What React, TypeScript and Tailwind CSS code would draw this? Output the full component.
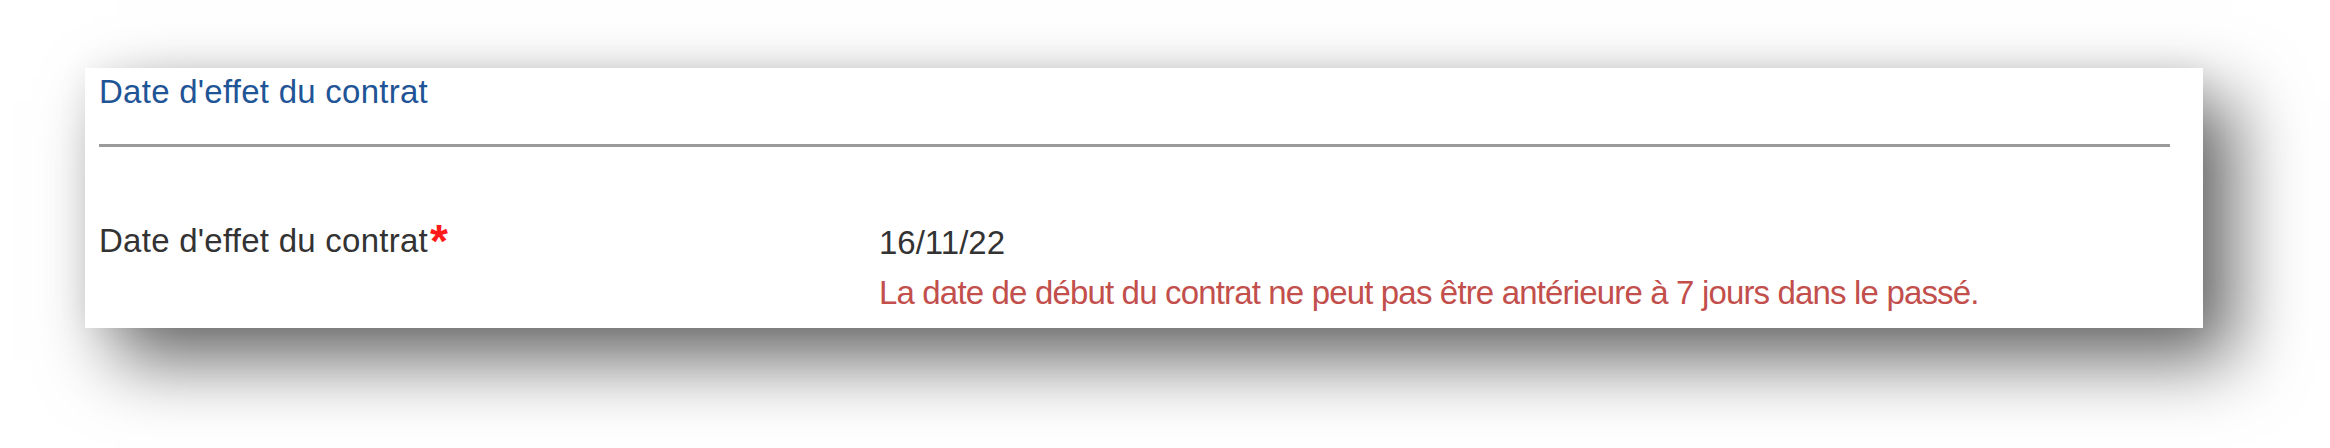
import React from "react";

export default function App() {
  return (
    <div
      className="w-[2330px] h-[448px] bg-white pt-[68px] pl-[85px] overflow-hidden"
      style={{ fontFamily: '"Liberation Sans", Arial, sans-serif' }}
    >
      <div className="w-[2118px] h-[260px] bg-white pl-[14px] pr-[33px] pt-[5px] shadow-[30px_32px_68px_rgba(0,0,0,0.6),0_0_30px_rgba(0,0,0,0.06)]">
        <div className="text-[33px] leading-[38px] tracking-[0.26px] text-[#1f5596]">Date d'effet du contrat</div>
        <div className="mt-[32.5px] h-[3px] bg-[#9a9a9a]" />
        <div className="mt-[75.5px] flex">
          <div className="w-[780px] shrink-0 text-[33px] leading-[38px] tracking-[0.26px] text-[#333333]">
            Date d'effet du contrat
            <span className="relative top-[5px] ml-[2px] font-bold text-[46px] leading-[0px] text-[#ff1a1a]">*</span>
          </div>
          <div className="pt-[2px]">
            <div className="text-[33px] leading-[38px] text-[#333333]">16/11/22</div>
            <div className="mt-[12px] text-[33px] leading-[38px] tracking-[-0.84px] text-[#c24f4c]">
              La date de début du contrat ne peut pas être antérieure à 7 jours dans le passé.
            </div>
          </div>
        </div>
      </div>
    </div>
  );
}
